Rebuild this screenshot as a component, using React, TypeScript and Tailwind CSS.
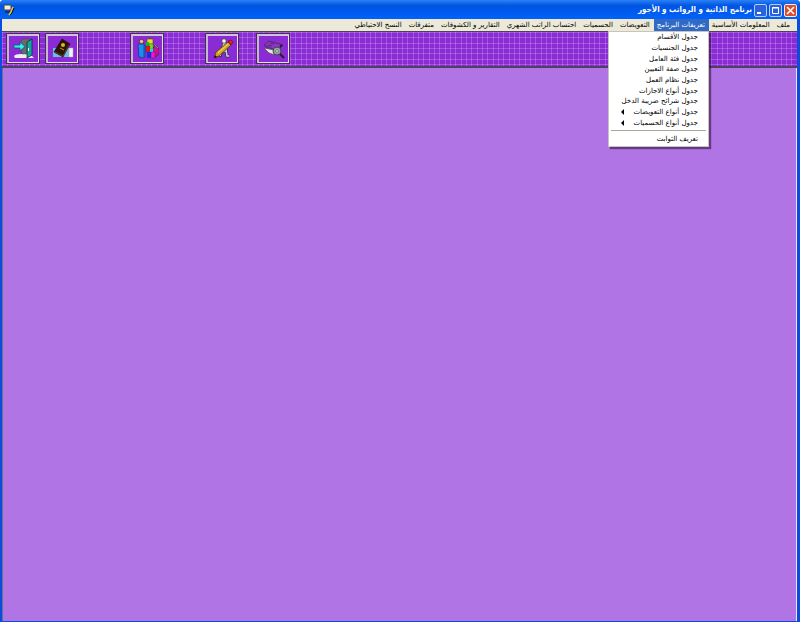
import type { ReactNode } from "react";

type MenuEntry = { label: string; items?: { label: string; sub?: boolean }[] };

const menus: MenuEntry[] = [
  { label: "ملف" },
  { label: "المعلومات الأساسية" },
  {
    label: "تعريفات البرنامج",
    items: [
      { label: "جدول الأقسام" },
      { label: "جدول الجنسيات" },
      { label: "جدول فئة العامل" },
      { label: "جدول صفة التعيين" },
      { label: "جدول نظام العمل" },
      { label: "جدول أنواع الاجازات" },
      { label: "جدول شرائح ضريبة الدخل" },
      { label: "جدول أنواع التعويضات", sub: true },
      { label: "جدول أنواع الحسميات", sub: true },
    ],
  },
  { label: "التعويضات" },
  { label: "الحسميات" },
  { label: "احتساب الراتب الشهري" },
  { label: "التقارير و الكشوفات" },
  { label: "متفرقات" },
  { label: "النسخ الاحتياطي" },
];

function AppIcon() {
  return (
    <svg viewBox="0 0 12 12" className="size-3" aria-hidden="true">
      <path d="M1 1h7v5H1z" fill="#f0ecdf" stroke="#444" />
      <path d="M2 8h6" stroke="#112" />
      <path d="M10 3 8 8l-2 3" stroke="#e8c81c" strokeWidth="1.6" fill="none" />
      <path d="m11 4-2 5-2 2" stroke="#111" fill="none" />
    </svg>
  );
}

function ExitIcon() {
  return (
    <svg viewBox="0 0 22 22" className="size-[22px]" aria-hidden="true">
      <path d="M1 18q1-2 7-2h9l4 4H2z" fill="#eee" />
      <path d="M8 3l2-2h7v15H9z" fill="#6a6a6a" stroke="#444" strokeWidth=".5" />
      <path d="m14 4 5-3v16l-5 3z" fill="#18a4a4" stroke="#033" strokeWidth=".8" />
      <path d="M15.5 10v3" stroke="#fff" />
      <path d="M1 7h6V4l5 4.500L7 13v-3H1z" fill="#30ecf0" stroke="#065858" strokeWidth=".7" />
    </svg>
  );
}

function BookIcon() {
  return (
    <svg viewBox="0 0 22 22" className="size-[22px]" aria-hidden="true">
      <path d="M1 10h16v9H1z" fill="#69bde6" />
      <path d="M17 10h4v9h-4z" fill="#f4f4f4" stroke="#aaa" strokeWidth=".5" />
      <path d="m10 1 8 5-7 13-9-5z" fill="#2c1404" stroke="#100800" strokeWidth=".6" />
      <path d="m3 14 8 4 6-11" stroke="#7a5020" strokeWidth=".7" fill="none" />
      <circle cx="11" cy="7" r="2" fill="#e0b818" />
      <path d="m8 10 4 2" stroke="#c89a20" />
    </svg>
  );
}

function BlocksIcon() {
  return (
    <svg viewBox="0 0 22 22" className="size-[22px]" aria-hidden="true">
      <path d="M1 6h6l1 2v11l-2 1-4-1z" fill="#1c8cf0" stroke="#083878" strokeWidth=".7" />
      <path d="M7 7v12" stroke="#0a3f98" strokeWidth=".8" />
      <circle cx="4.5" cy="3.5" r="2.2" fill="#f0b8a0" stroke="#511" strokeWidth=".7" />
      <path d="m15 11 4-4 3 4v5l-4 3h-3z" fill="#c0188c" stroke="#4a0535" strokeWidth=".5" />
      <path d="m18 7 3 3" stroke="#2ac03a" />
      <path d="M10 1h6v5h-6z" fill="#e8e010" stroke="#333" strokeWidth=".5" />
      <path d="M9 4h3v4H9z" fill="#19b52a" />
      <path d="M12 6h4v5h-4z" fill="#6be61d" stroke="#333" strokeWidth=".3" />
      <path d="M9 8h4v6H9z" fill="#e51818" stroke="#333" strokeWidth=".3" />
      <path d="M13 11h3v5h-3z" fill="#18d7e8" />
      <path d="M10 14h4v6h-4z" fill="#182ce8" />
      <path d="M14 14h4v6h-4z" fill="#e818d8" stroke="#313" strokeWidth=".3" />
    </svg>
  );
}

function PencilIcon() {
  return (
    <svg viewBox="0 0 22 22" className="size-[22px]" aria-hidden="true">
      <path d="M12 5 8 19M13 5l2 13h2M8 13h8" stroke="#333" strokeWidth="3" fill="none" />
      <path d="M12 5 8 18M13 5l2 13h2M9 13h6" stroke="#d0d0e4" strokeWidth="1.5" fill="none" />
      <circle cx="12" cy="3" r="2.2" fill="#f4f4f4" stroke="#333" strokeWidth=".6" />
      <path d="m2 20 2-6L16 4l3 3L7 18z" fill="#d0a428" stroke="#443000" strokeWidth=".7" />
      <path d="M6 15 16 6" stroke="#f6e080" />
      <path d="m16 3 3-1 2 2-2 3z" fill="#e82020" stroke="#500" strokeWidth=".5" />
      <path d="m2 20 1-3 2 2z" fill="#111" />
    </svg>
  );
}

function CameraIcon() {
  return (
    <svg viewBox="0 0 22 22" className="size-[22px]" aria-hidden="true">
      <path d="m1 7 5-4 14 4-6 6z" fill="#8c34cc" stroke="#3a3040" strokeWidth=".8" />
      <path d="m7 5 4 1M5 7l4 1M3 9l5 4" stroke="#3a3040" strokeWidth=".8" />
      <path d="m1 10 10 2 1 5-6-2z" fill="#e4e4e4" stroke="#444" strokeWidth=".6" />
      <circle cx="14" cy="13" r="4" fill="#98a4a4" stroke="#444" />
      <circle cx="14" cy="13" r="1.5" fill="#c8d4d4" stroke="#555" strokeWidth=".6" />
      <path d="m17 9 2-2M17 16l4 4" stroke="#222" strokeWidth="1.8" />
    </svg>
  );
}

function ToolButton({ label, className, children }: { label: string; className?: string; children: ReactNode }) {
  return (
    <button
      type="button"
      aria-label={label}
      className={`flex h-[31px] w-[34px] items-center justify-center border border-[#4a2a5c] bg-[#8b2bd6] ${className ?? ""}`}
    >
      <span className="flex h-full w-full items-center justify-center border-t-2 border-r border-b border-l-2 border-[#e4dce8] border-t-[#cfc4d6] border-l-[#c4b8cc]">
        {children}
      </span>
    </button>
  );
}

function SubMenu({ items }: { items: { label: string; sub?: boolean }[] }) {
  return (
    <div
      role="menu"
      className="absolute top-full right-0 z-10 w-[101px] border border-[#c8c4bc] bg-white text-black shadow-[2px_2px_1px_rgba(50,20,70,0.6)]"
    >
      <div className="flex h-24 flex-col">
        {items.map((item) => (
          <button
            key={item.label}
            type="button"
            role="menuitem"
            className="relative flex flex-1 items-center pr-[10px] whitespace-nowrap"
          >
            {item.label}
            {item.sub && (
              <svg viewBox="0 0 4 6" className="absolute left-3 h-[6px] w-1" aria-hidden="true">
                <path d="M3 0v6L0 3z" fill="#000" />
              </svg>
            )}
          </button>
        ))}
      </div>
      <hr className="mx-0.5 mt-0.5 border-[#aaa79c]" />
      <button type="button" role="menuitem" className="flex h-[15px] w-full items-center pr-[10px]">
        تعريف الثوابت
      </button>
    </div>
  );
}

export default function App() {
  return (
    <div
      dir="rtl"
      className="flex min-h-screen flex-col rounded-t-sm bg-[#0a4be0] font-['DejaVu_Sans','Noto_Sans',sans-serif] text-[7px] leading-[10px] text-black"
    >
      <header className="flex h-[19px] items-center justify-between rounded-t-sm bg-linear-to-b from-[#2a80f4] via-[#0054e3] via-30% to-[#0062fb] pt-px pr-[3px] pl-[3px]">
        <div className="flex items-center gap-0.5">
          <button type="button" aria-label="إغلاق" className="flex size-[13px] items-center justify-center rounded-xs border border-[#e8eefc] bg-[#dc4c28]">
            <svg viewBox="0 0 9 9" className="size-[9px]" aria-hidden="true">
              <path d="m1 1 7 7M8 1 1 8" stroke="#fff" strokeWidth="1.6" />
            </svg>
          </button>
          <button type="button" aria-label="تكبير" className="flex size-[13px] items-center justify-center rounded-xs border border-[#b8ccf8] bg-[#2a62dc]">
            <svg viewBox="0 0 9 9" className="size-[9px]" aria-hidden="true">
              <path d="M1.5 1.5h6v6h-6zM1 2h7" stroke="#fff" fill="none" />
            </svg>
          </button>
          <button type="button" aria-label="تصغير" className="flex size-[13px] items-center justify-center rounded-xs border border-[#b8ccf8] bg-[#2a62dc]">
            <svg viewBox="0 0 9 9" className="size-[9px]" aria-hidden="true">
              <path d="M1 7h4" stroke="#fff" strokeWidth="2" />
            </svg>
          </button>
          <h1 className="font-['DejaVu_Sans_Condensed','DejaVu_Sans',sans-serif] text-[8px] leading-4 font-bold whitespace-nowrap text-white">
            برنامج الذاتية و الرواتب و الأجور
          </h1>
        </div>
        <AppIcon />
      </header>

      <div className="mr-[3px] mb-px ml-0.5 flex grow flex-col">
        <nav className="flex h-3 bg-[#ece9d8] pr-[3px]" aria-label="القائمة الرئيسية">
          {menus.map((menu) => (
            <div key={menu.label} className="relative">
              <button
                type="button"
                className={`flex h-3 items-center pr-1 pl-[3px] whitespace-nowrap ${menu.items ? "bg-[#316ac5] text-white" : ""}`}
              >
                {menu.label}
              </button>
              {menu.items && <SubMenu items={menu.items} />}
            </div>
          ))}
        </nav>

        <div
          dir="ltr"
          className="flex h-[37px] items-start border-t border-b-2 border-[#4f405c] bg-[#8b2bd6] bg-[linear-gradient(#ffffff33_1px,transparent_1px_5px,#ffffff33_5px_6px,transparent_6px_11px,#ffffff33_11px_12px,transparent_12px),linear-gradient(90deg,#ffffff33_1px,transparent_1px_5px,#ffffff33_5px_6px,transparent_6px_11px,#ffffff33_11px_12px,transparent_12px)] bg-size-[16px_16px] pt-px pl-1"
        >
          <ToolButton label="خروج"><ExitIcon /></ToolButton>
          <ToolButton label="الدليل" className="ml-[5px]"><BookIcon /></ToolButton>
          <ToolButton label="الموظفون" className="ml-[51px]"><BlocksIcon /></ToolButton>
          <ToolButton label="تحرير" className="ml-[41px]"><PencilIcon /></ToolButton>
          <ToolButton label="عرض" className="ml-[17px]"><CameraIcon /></ToolButton>
        </div>

        <main className="grow border-r border-l border-r-[#efe4f4] border-l-[#5a7890] bg-[#b074e4]" />
      </div>
    </div>
  );
}
